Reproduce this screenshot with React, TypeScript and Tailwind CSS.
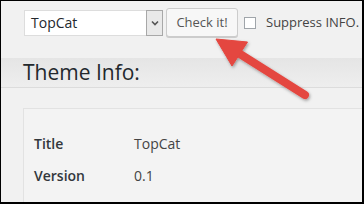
import React from "react";

const ROWS = [
  { label: "Title", value: "TopCat" },
  { label: "Version", value: "0.1" },
  { label: "Author", value: "" },
];

export default function App() {
  return (
    <div className="relative w-[364px] h-[204px] overflow-hidden border-t border-l border-r-2 border-b-2 border-black bg-[#f1f1f1] font-['Open_Sans',sans-serif] text-[#23282d]">
      {/* Toolbar */}
      <div className="flex items-center h-[29px] mt-[7px] pl-[23px] whitespace-nowrap">
        <div className="flex shrink-0 h-[26px] w-[139px] border border-[#dddddd] bg-white">
          <span className="flex-1 pl-[6px] text-[14px] leading-[24px]">TopCat</span>
          <span className="flex items-center justify-center w-[17px] -my-px -mr-px border border-[#a8a8a8] bg-[#e9e9e9]">
            <svg width="8" height="6" viewBox="0 0 8 6">
              <path d="M1 1.5 L4 4.5 L7 1.5" stroke="#555" strokeWidth="1.6" fill="none" />
            </svg>
          </span>
        </div>
        <button className="shrink-0 ml-[3px] h-[29px] w-[72px] rounded-[3px] border border-[#cccccc] bg-[#f7f7f7] text-[13px] text-[#555] shadow-[0_1px_0_#ccc]">
          Check it!
        </button>
        <span className="shrink-0 ml-[6px] w-[12px] h-[12px] border border-[#a0a5aa] bg-white" />
        <span className="ml-[10px] text-[13px] text-[#444]">Suppress INFO.</span>
      </div>

      {/* Section header */}
      <div className="mt-[21px] h-[30px] border-b border-[#dcdcdc] bg-gradient-to-b from-[#e5e5e5] to-[#eeeeee] pl-[22px]">
        <h2 className="text-[21px] leading-[29px] text-[#23282d]">Theme Info:</h2>
      </div>

      {/* Info table */}
      <div className="ml-[22px] mt-[20px] border-t border-l border-[#e2e2e2] bg-[#f3f3f3] pt-[18px] pl-[10px]">
        {ROWS.map(r => (
          <div key={r.label} className="flex h-[32px] items-center text-[14px]">
            <span className="w-[100px] font-semibold text-[#32373c]">{r.label}</span>
            <span className="text-[#444]">{r.value}</span>
          </div>
        ))}
      </div>

      {/* Annotation arrow */}
      <svg className="absolute left-0 top-0" width="364" height="204" viewBox="0 0 364 204">
        <defs>
          <filter id="sh" x="-20%" y="-20%" width="140%" height="140%">
            <feDropShadow dx="1" dy="1.5" stdDeviation="1.5" floodColor="#000" floodOpacity="0.35" />
          </filter>
        </defs>
        <g filter="url(#sh)" fill="#e4463f" stroke="#e4463f">
          <line x1="304" y1="94" x2="239" y2="53" strokeWidth="8" strokeLinecap="round" />
          <polygon points="215,38 246.5,41 231,65" strokeWidth="1" strokeLinejoin="round" />
        </g>
      </svg>
    </div>
  );
}
